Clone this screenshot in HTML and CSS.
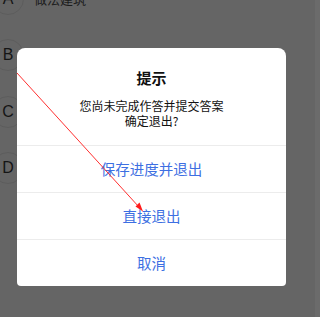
FILE: index.html
```html
<!doctype html>
<html lang="zh-CN">
<head>
  <meta charset="utf-8">
  <title>提示</title>
  <link rel="stylesheet" href="styles.css">
</head>
<body>
<div id="page">
  <div class="options">
    <div class="opt"><span class="ball">A</span><span class="txt">做法建筑</span></div>
    <div class="opt"><span class="ball">B</span><span class="txt">设计建筑</span></div>
    <div class="opt"><span class="ball">C</span><span class="txt">施工建筑</span></div>
    <div class="opt"><span class="ball">D</span><span class="txt">以上都是</span></div>
  </div>

  <div class="dialog">
    <div class="head">
      <div class="title">提示</div>
      <div class="msg">您尚未完成作答并提交答案</div>
      <div class="msg">确定退出?</div>
    </div>
    <div class="btn">保存进度并退出</div>
    <div class="btn">直接退出</div>
    <div class="btn">取消</div>
  </div>

  <!-- annotation arrow drawn over the screenshot -->
  <svg class="mark" width="320" height="317" viewBox="0 0 320 317">
    <line x1="17" y1="73" x2="139" y2="207" stroke="#ff3030" stroke-width="1"/>
    <polygon points="143,211.5 135.5,206.5 139.5,202.5" fill="#ff1a1a"/>
  </svg>
</div>
</body>
</html>
```

FILE: styles.css
```css
html {
  background: #6b6b6b;
}
body {
  margin: 0;
  font-family: "Noto Sans CJK SC", "Noto Sans", sans-serif;
}
#page {
  position: relative;
  width: 315px;
  height: 317px;
  overflow: hidden;
  background: #656565;
}

/* options of the question, dimmed behind the dialog */
.options {
  margin-top: -29.5px;
}
.opt {
  display: flex;
  align-items: center;
  height: 56.5px;
}
.ball {
  display: flex;
  align-items: center;
  justify-content: center;
  width: 30px;
  height: 30px;
  margin-left: -8px;
  border: 1px solid #5d5d5d;
  border-radius: 50%;
  font-family: "Liberation Sans", sans-serif;
  font-size: 16px;
  color: #151515;
}
.txt {
  margin-left: 10px;
  font-size: 13px;
  color: #1c1c1c;
}

.dialog {
  position: absolute;
  left: 17px;
  top: 48px;
  width: 269px;
  background: #fff;
  border-radius: 8px 8px 4px 4px;
  overflow: hidden;
  text-align: center;
}
.head {
  padding: 20px 0 17px;
}
.title {
  font-size: 15px;
  font-weight: bold;
  line-height: 20px;
  color: #111;
  margin-bottom: 10px;
}
.msg {
  font-size: 12px;
  line-height: 15px;
  color: #111;
}
.btn {
  height: 46px;
  line-height: 46px;
  border-top: 1px solid #ececec;
  font-size: 14.5px;
  color: #3d6fe2;
}

.mark {
  position: absolute;
  left: 0;
  top: 0;
}
```
